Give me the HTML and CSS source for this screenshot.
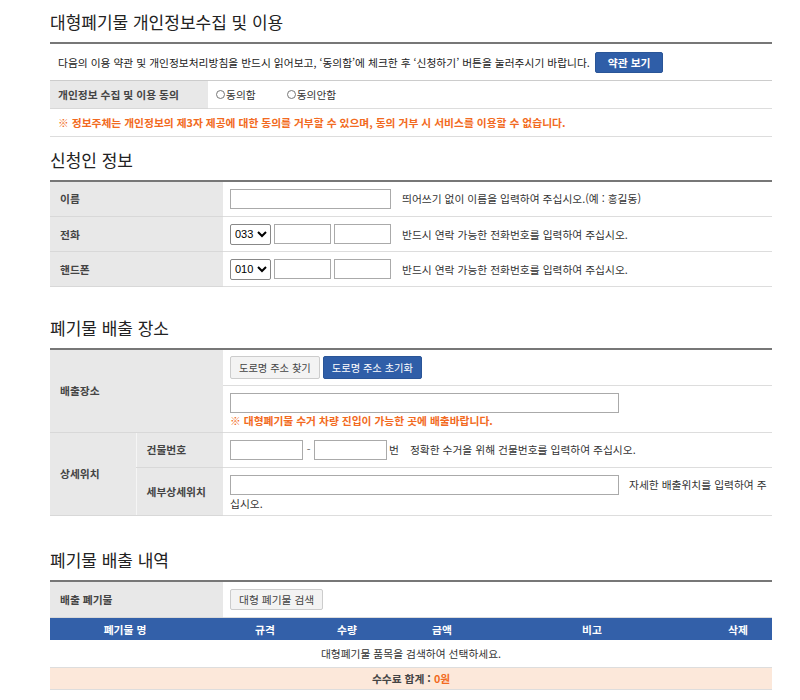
FILE: index.html
```html
<!DOCTYPE html>
<html lang="ko">
<head>
    <meta charset="UTF-8">
    <meta name="viewport" content="width=device-width, initial-scale=1.0">
    <title>대형폐기물 배출 신청</title>
    <link rel="stylesheet" href="styles.css">
</head>
<body>
    <div class="wrap">
        <h1 class="page-title">대형폐기물 개인정보수집 및 이용</h1>
        <div class="notice-row">
            <span>다음의 이용 약관 및 개인정보처리방침을 반드시 읽어보고, ‘동의함’에 체크한 후 ‘신청하기’ 버튼을 눌러주시기 바랍니다.</span>
            <button type="button" class="btn btn-blue">약관 보기</button>
        </div>
        <table class="form-table agree-table">
            <tr>
                <th>개인정보 수집 및 이용 동의</th>
                <td>
                    <label class="radio"><span class="dot"></span>동의함</label>
                    <label class="radio"><span class="dot"></span>동의안함</label>
                </td>
            </tr>
        </table>
        <p class="warn-row">※ 정보주체는 개인정보의 제3자 제공에 대한 동의를 거부할 수 있으며, 동의 거부 시 서비스를 이용할 수 없습니다.</p>

        <h2 class="section-title">신청인 정보</h2>
        <table class="form-table">
            <tr>
                <th>이름</th>
                <td><input type="text" class="inp inp-name"><span class="help">띄어쓰기 없이 이름을 입력하여 주십시오.(예 : 홍길동)</span></td>
            </tr>
            <tr>
                <th>전화</th>
                <td>
                    <select class="sel"><option>033</option></select>
                    <input type="text" class="inp inp-num">
                    <input type="text" class="inp inp-num"><span class="help">반드시 연락 가능한 전화번호를 입력하여 주십시오.</span>
                </td>
            </tr>
            <tr>
                <th>핸드폰</th>
                <td>
                    <select class="sel"><option>010</option></select>
                    <input type="text" class="inp inp-num">
                    <input type="text" class="inp inp-num"><span class="help">반드시 연락 가능한 전화번호를 입력하여 주십시오.</span>
                </td>
            </tr>
        </table>

        <h2 class="section-title place-title">폐기물 배출 장소</h2>
        <table class="form-table place-table">
            <colgroup>
                <col class="c1">
                <col class="c2">
                <col>
            </colgroup>
            <tr>
                <th colspan="2" rowspan="2">배출장소</th>
                <td class="btn-cell">
                    <button type="button" class="btn btn-gray">도로명 주소 찾기</button>
                    <button type="button" class="btn btn-blue">도로명 주소 초기화</button>
                </td>
            </tr>
            <tr>
                <td class="addr-cell">
                    <input type="text" class="inp inp-wide">
                    <p class="warn">※ 대형폐기물 수거 차량 진입이 가능한 곳에 배출바랍니다.</p>
                </td>
            </tr>
            <tr>
                <th rowspan="2">상세위치</th>
                <th class="sub-th">건물번호</th>
                <td>
                    <input type="text" class="inp inp-bld"><span class="dash">-</span><input type="text" class="inp inp-bld"><span class="unit">번</span><span class="help">정확한 수거을 위해 건물번호를 입력하여 주십시오.</span>
                </td>
            </tr>
            <tr>
                <th class="sub-th">세부상세위치</th>
                <td class="detail-cell"><input type="text" class="inp inp-wide"><span class="help">자세한 배출위치를 입력하여 주십시오.</span></td>
            </tr>
        </table>

        <h2 class="section-title list-title">폐기물 배출 내역</h2>
        <table class="form-table">
            <tr>
                <th>배출 폐기물</th>
                <td class="search-cell"><button type="button" class="btn btn-gray">대형 폐기물 검색</button></td>
            </tr>
        </table>
        <div class="list-head">
            <span>폐기물 명</span>
            <span>규격</span>
            <span>수량</span>
            <span>금액</span>
            <span>비고</span>
            <span class="last">삭제</span>
        </div>
        <div class="list-empty">대형폐기물 품목을 검색하여 선택하세요.</div>
        <div class="list-total">수수료 합계 : <em>0원</em></div>
    </div>
</body>
</html>
```

FILE: styles.css
```css
* {
    margin: 0;
    padding: 0;
    box-sizing: border-box;
}

body {
    font-family: "Noto Sans CJK KR", "Liberation Sans", sans-serif;
    font-size: 10.75px;
    color: #333;
    background: #fff;
}

.wrap {
    width: 722px;
    margin-left: 50px;
}

.page-title {
    font-size: 17px;
    font-weight: normal;
    color: #222;
    line-height: 26px;
    padding-top: 9px;
    padding-bottom: 7px;
    border-bottom: 2px solid #777;
}

.notice-row {
    display: flex;
    align-items: center;
    gap: 5px;
    height: 37px;
    padding-left: 8px;
    border-bottom: 1px solid #ccc;
    color: #222;
}

.btn {
    font-family: inherit;
    font-size: 10.75px;
    height: 22px;
    padding: 0 10px;
    border-radius: 2px;
    cursor: pointer;
}

.btn-blue {
    background: #2f5ea8;
    border: 1px solid #2a5597;
    color: #fff;
}

.btn-gray {
    background: #f3f3f3;
    border: 1px solid #ccc;
    color: #444;
}

.notice-row .btn {
    height: 21px;
    padding: 0 12px;
    font-weight: bold;
}

/* 공통 폼 테이블 */
.form-table {
    width: 100%;
    border-collapse: collapse;
}

.form-table th {
    width: 173px;
    background: #e8e8e8;
    text-align: left;
    font-weight: bold;
    color: #444;
    padding-left: 10px;
    border-bottom: 1px solid #d8d8d8;
}

.form-table td {
    height: 35px;
    padding-left: 7px;
    border-bottom: 1px solid #ddd;
    white-space: nowrap;
}

.agree-table th,
.agree-table td {
    height: 27px;
}

.agree-table th {
    width: 158px;
    padding-left: 8px;
}

.radio {
    display: inline-flex;
    align-items: center;
    margin-left: 1px;
    margin-right: 27px;
    color: #333;
}

.dot {
    width: 9px;
    height: 9px;
    border: 1px solid #777;
    border-radius: 50%;
    margin-right: 1px;
}

.warn-row {
    height: 28px;
    line-height: 28px;
    padding-left: 8px;
    color: #f26a21;
    font-weight: bold;
    border-bottom: 1px solid #ddd;
}

.section-title {
    font-size: 17px;
    font-weight: normal;
    color: #222;
    line-height: 24px;
    padding-top: 11px;
    padding-bottom: 8px;
    border-bottom: 2px solid #777;
}

.place-title {
    padding-top: 29px;
}

.list-title {
    padding-top: 32px;
}

.inp {
    height: 20px;
    border: 1px solid #aaa;
    vertical-align: middle;
    font-family: inherit;
}

.inp-name {
    width: 161px;
}

.inp-num {
    width: 57px;
}

.sel {
    width: 41px;
    height: 21px;
    border: 1px solid #888;
    border-radius: 2px;
    font-family: "Liberation Sans", sans-serif;
    font-size: 11px;
    vertical-align: middle;
    background: #fff;
}

.help {
    margin-left: 11px;
    vertical-align: middle;
    color: #333;
}

.place-table th {
    width: auto;
}

.c1 {
    width: 86px;
}

.c2 {
    width: 87px;
}

.sub-th {
    border-left: 1px solid #f5f5f5;
}

.btn-cell .btn {
    height: 23px;
    padding: 0 8px;
    font-size: 10.25px;
}

.form-table .addr-cell {
    height: 47px;
    vertical-align: top;
    padding-top: 7px;
}

.inp-wide {
    width: 389px;
}

.warn {
    color: #f26a21;
    font-weight: bold;
    line-height: 14px;
    margin-top: 1px;
}

.inp-bld {
    width: 73px;
}

.dash {
    display: inline-block;
    width: 11px;
    text-align: center;
    vertical-align: middle;
    color: #666;
}

.unit {
    margin-left: 2px;
    vertical-align: middle;
}

.form-table .detail-cell {
    white-space: normal;
    height: 48px;
    vertical-align: top;
    padding-top: 7px;
    line-height: 16px;
}

.detail-cell .help {
    margin-left: 10px;
}

.form-table .search-cell {
    height: 36px;
}

.search-cell .btn {
    height: 21px;
    padding: 0 8px;
}

/* 배출 내역 목록 */
.list-head {
    display: grid;
    grid-template-columns: 150px 130px 34px 156px 144px 108px;
    height: 22px;
    align-items: center;
    background: #3360a9;
    color: #fff;
    font-weight: bold;
    text-align: center;
}

.list-head .last {
    padding-left: 40px;
}

.list-empty {
    height: 28px;
    line-height: 28px;
    text-align: center;
    color: #333;
    border-bottom: 1px solid #ddd;
}

.list-total {
    height: 22px;
    line-height: 22px;
    text-align: center;
    background: #fce8da;
    font-weight: bold;
    color: #444;
    border-bottom: 1px solid #ddd;
}

.list-total em {
    font-style: normal;
    color: #f26a21;
}
```
